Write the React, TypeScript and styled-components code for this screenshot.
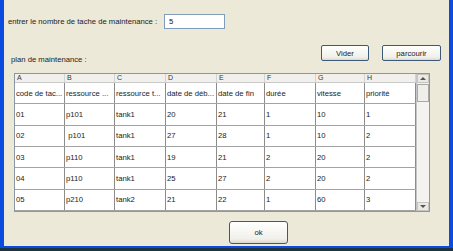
import styled, { createGlobalStyle } from 'styled-components';

const GlobalStyle = createGlobalStyle`
  html, body { margin: 0; padding: 0; }
  body { font-family: "Liberation Sans", Arial, sans-serif; color: #1b1b1b; }
`;

const columns = [
	{ key: 'A', width: 50, title: 'code de tac...' },
	{ key: 'B', width: 50, title: 'ressource ...' },
	{ key: 'C', width: 51, title: 'ressource t...' },
	{ key: 'D', width: 51, title: 'date de déb...' },
	{ key: 'E', width: 48, title: 'date de fin' },
	{ key: 'F', width: 51, title: 'durée' },
	{ key: 'G', width: 49, title: 'vitesse' },
	{ key: 'H', width: 51, title: 'priorité' },
];

const rows = [
	['01', 'p101', 'tank1', '20', '21', '1', '10', '1'],
	['02', ' p101', 'tank1', '27', '28', '1', '10', '2'],
	['03', 'p110', 'tank1', '19', '21', '2', '20', '2'],
	['04', 'p110', 'tank1', '25', '27', '2', '20', '2'],
	['05', 'p210', 'tank2', '21', '22', '1', '60', '3'],
];

export default function App() {
	return (
		<Screen>
			<GlobalStyle />
			<Frame>
				<CountRow>
					<Label>entrer le nombre de tache de maintenance :</Label>
					<Field readOnly value="5" />
				</CountRow>
				<PlanRow>
					<PlanLabel>plan de maintenance :</PlanLabel>
					<ButtonGroup>
						<Button $width={48}>Vider</Button>
						<Button $width={59}>parcourir</Button>
					</ButtonGroup>
				</PlanRow>
				<TableBox>
					<GridArea>
						<HeaderRow>
							{columns.map((c) => (
								<HeaderCell key={c.key} $width={c.width}>
									{c.key}
								</HeaderCell>
							))}
						</HeaderRow>
						<Body>
							<Row>
								{columns.map((c) => (
									<Cell key={c.key} $width={c.width}>
										{c.title}
									</Cell>
								))}
							</Row>
							{rows.map((r) => (
								<Row key={r[0]}>
									{r.map((v, i) => (
										<Cell key={i} $width={columns[i].width}>
											{v}
										</Cell>
									))}
								</Row>
							))}
						</Body>
					</GridArea>
					<ScrollBar>
						<ArrowButton>
							<Arrow $dir="up" />
						</ArrowButton>
						<Thumb />
						<Track />
						<ArrowButton>
							<Arrow $dir="down" />
						</ArrowButton>
					</ScrollBar>
				</TableBox>
				<OkButton>ok</OkButton>
			</Frame>
		</Screen>
	);
}

const Screen = styled.div`
	width: 453px;
	height: 251px;
	background: #1d3440;
	overflow: hidden;
`;

const Frame = styled.div`
	box-sizing: border-box;
	height: 248px;
	display: flex;
	flex-direction: column;
	background: #ece9d8;
	border-style: solid;
	border-color: #0b4be0;
	border-width: 0 4px 2px 4px;
	font-size: 7.7px;
`;

const CountRow = styled.div`
	display: flex;
	align-items: center;
	margin-top: 14px;
	padding-left: 4px;
`;

const Label = styled.span`
	width: 156px;
`;

const Field = styled.input`
	box-sizing: border-box;
	width: 61px;
	height: 15px;
	margin: 0;
	padding: 0 0 0 4px;
	border: 1px solid #7f9db9;
	background: #fff;
	font-family: inherit;
	font-size: 7.7px;
	color: #111;
	outline: none;
`;

const PlanRow = styled.div`
	display: flex;
	justify-content: space-between;
	height: 21px;
	margin-top: 16px;
	padding: 0 8px 0 7px;
`;

const PlanLabel = styled.span`
	align-self: flex-end;
	line-height: 13px;
`;

const ButtonGroup = styled.div`
	display: flex;
	gap: 13px;
`;

const Button = styled.button<{ $width: number }>`
	box-sizing: border-box;
	width: ${(p) => p.$width}px;
	height: 16px;
	margin: 0;
	padding: 0;
	border: 1px solid #3c5a78;
	border-radius: 2px;
	background: linear-gradient(#ffffff, #f1f0ea 80%, #dcd8cc);
	font-family: inherit;
	font-size: 7.7px;
	color: #1b1b1b;
`;

const TableBox = styled.div`
	box-sizing: border-box;
	display: flex;
	width: 416px;
	height: 139px;
	margin: 7px 0 0 10px;
	border: 1px solid #8b98a4;
	background: #fff;
`;

const GridArea = styled.div`
	display: flex;
	flex-direction: column;
	width: 401px;
`;

const HeaderRow = styled.div`
	display: flex;
	height: 8px;
	background: #f1f0ec;
	border-bottom: 1px solid #c9c9c9;
`;

const HeaderCell = styled.div<{ $width: number }>`
	box-sizing: border-box;
	width: ${(p) => p.$width}px;
	padding-left: 2px;
	border-right: 1px solid #d3d3d3;
	font-size: 7px;
	line-height: 8px;
	color: #333;
`;

const Body = styled.div`
	flex: 1;
	display: flex;
	flex-direction: column;
`;

const Row = styled.div`
	flex: 1;
	display: flex;
	border-bottom: 1px solid #a3a3a3;
`;

const Cell = styled.div<{ $width: number }>`
	box-sizing: border-box;
	display: flex;
	align-items: center;
	width: ${(p) => p.$width}px;
	padding-left: 1px;
	border-right: 1px solid #8c8c8c;
	overflow: hidden;
	white-space: pre;
`;

const ScrollBar = styled.div`
	display: flex;
	flex-direction: column;
	width: 13px;
	background: #f4f3ef;
	border-left: 1px solid #c6c6c6;
`;

const ArrowButton = styled.div`
	box-sizing: border-box;
	display: flex;
	align-items: center;
	justify-content: center;
	height: 9px;
	background: #ece9e0;
	border: 1px solid #c4c4c4;
`;

const Arrow = styled.div<{ $dir: 'up' | 'down' }>`
	width: 0;
	height: 0;
	border-left: 3px solid transparent;
	border-right: 3px solid transparent;
	${(p) => (p.$dir === 'up' ? 'border-bottom: 3px solid #555;' : 'border-top: 3px solid #555;')}
`;

const Thumb = styled.div`
	box-sizing: border-box;
	height: 18px;
	margin-top: 1px;
	background: #efeee8;
	border: 1px solid #a8a8a8;
`;

const Track = styled.div`
	flex: 1;
`;

const OkButton = styled(Button).attrs({ $width: 59 })`
	height: 23px;
	margin: 9px 0 0 225px;
	border-radius: 3px;
`;
